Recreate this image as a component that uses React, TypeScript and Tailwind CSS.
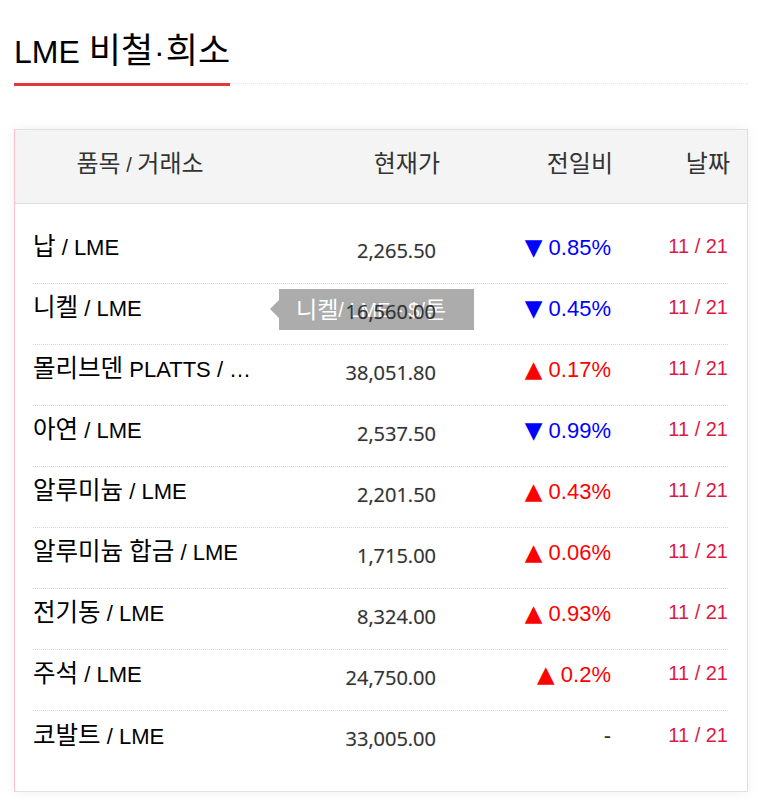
import React from 'react';

type Row = {
  name: string;
  price: string;
  dir: 'up' | 'down' | 'none';
  change: string;
  date: string;
};

const rows: Row[] = [
  { name: '납 / LME', price: '2,265.50', dir: 'down', change: '0.85%', date: '11 / 21' },
  { name: '니켈 / LME', price: '16,560.00', dir: 'down', change: '0.45%', date: '11 / 21' },
  { name: '몰리브덴 PLATTS / …', price: '38,051.80', dir: 'up', change: '0.17%', date: '11 / 21' },
  { name: '아연 / LME', price: '2,537.50', dir: 'down', change: '0.99%', date: '11 / 21' },
  { name: '알루미늄 / LME', price: '2,201.50', dir: 'up', change: '0.43%', date: '11 / 21' },
  { name: '알루미늄 합금 / LME', price: '1,715.00', dir: 'up', change: '0.06%', date: '11 / 21' },
  { name: '전기동 / LME', price: '8,324.00', dir: 'up', change: '0.93%', date: '11 / 21' },
  { name: '주석 / LME', price: '24,750.00', dir: 'up', change: '0.2%', date: '11 / 21' },
  { name: '코발트 / LME', price: '33,005.00', dir: 'none', change: '-', date: '11 / 21' },
];

// hangul in the reference renders wider than Noto CJK at the same size, so bump those runs
function Ko({ text, cls }: { text: string; cls: string }) {
  return (
    <>
      {text.split(/([가-힣]+)/).map((part, i) =>
        /[가-힣]/.test(part) ? (
          <span key={i} className={cls}>
            {part}
          </span>
        ) : (
          part
        ),
      )}
    </>
  );
}

function Change({ dir, value }: { dir: Row['dir']; value: string }) {
  if (dir === 'none') return <span className="text-[#333]">{value}</span>;
  const up = dir === 'up';
  return (
    <span className={up ? 'text-[#ff0000]' : 'text-[#0000ff]'}>
      <span className="font-['DejaVu_Sans',sans-serif] text-[23px]">{up ? '▲' : '▼'}</span> {value}
    </span>
  );
}

export default function App() {
  return (
    <div className="min-h-[806px] bg-white font-['Liberation_Sans','Noto_Sans_CJK_KR',sans-serif] text-black">
      {/* title */}
      <div className="ml-[14px] w-[734px] pt-[31px]">
        <h2 className="text-[32px] leading-[40px] font-normal">
          LME <Ko text="비철" cls="text-[35px]" />
          <span className="px-[1px]">·</span>
          <Ko text="희소" cls="text-[35px]" />
        </h2>
        <div className="mt-[11px] flex items-start">
          <div className="h-[3px] w-[216px] bg-[#e0383d]" />
          <div className="flex-1 border-t border-dotted border-[#e4e4ec]" />
        </div>
      </div>

      {/* table box */}
      <div className="mt-[43px] ml-[14px] w-[734px] border border-[#e0e0e0] border-l-[#ffc0c8] bg-white shadow-[0_0_12px_rgba(0,0,0,0.06)]">
        <div className="grid h-[74px] grid-cols-[250px_175px_173px_117px] items-center border-b border-[#dedede] bg-[#f4f4f4] pr-[19px] pb-[4px] text-[20px] leading-[28px] text-[#333]">
          <div className="text-center">
            <Ko text="품목 / 거래소" cls="text-[24px]" />
          </div>
          <div className="text-right">
            <Ko text="현재가" cls="text-[24px]" />
          </div>
          <div className="text-right">
            <Ko text="전일비" cls="text-[24px]" />
          </div>
          <div className="text-right">
            <Ko text="날짜" cls="text-[24px]" />
          </div>
        </div>

        <div className="pt-[19px] pr-[19px] pb-[19px] pl-[18px]">
          {rows.map((r, i) => (
            <div
              key={r.name}
              className="relative grid h-[61px] grid-cols-[232px_171px_175px_117px] items-center border-b border-dotted border-[#d6d6d6] pb-[11px] last:border-b-0"
            >
              <div className="truncate text-[22px] leading-[28px]">
                <Ko text={r.name} cls="text-[24.5px]" />
              </div>
              <div className="relative z-10 pt-[6px] text-right font-['Open_Sans',sans-serif] text-[20px] leading-[28px] text-[#333] [text-shadow:0_0_1px_rgba(0,0,0,0.35)]">
                {r.price}
              </div>
              <div className="text-right text-[22px] leading-[28px]">
                <Change dir={r.dir} value={r.change} />
              </div>
              <div className="pb-[3px] text-right text-[20px] leading-[28px] text-[#dc1a44]">{r.date}</div>

              {i === 1 && (
                <div className="absolute top-[5px] left-[246px] flex h-[41px] w-[195px] items-center bg-[#acacac] pl-[17px] text-[20px] leading-[28px] text-white">
                  <span className="absolute top-[11px] left-[-9px] h-0 w-0 border-y-[9px] border-r-[9px] border-y-transparent border-r-[#acacac]" />
                  <Ko text="니켈 / LME - $/톤" cls="text-[23px]" />
                </div>
              )}
            </div>
          ))}
        </div>
      </div>
    </div>
  );
}
